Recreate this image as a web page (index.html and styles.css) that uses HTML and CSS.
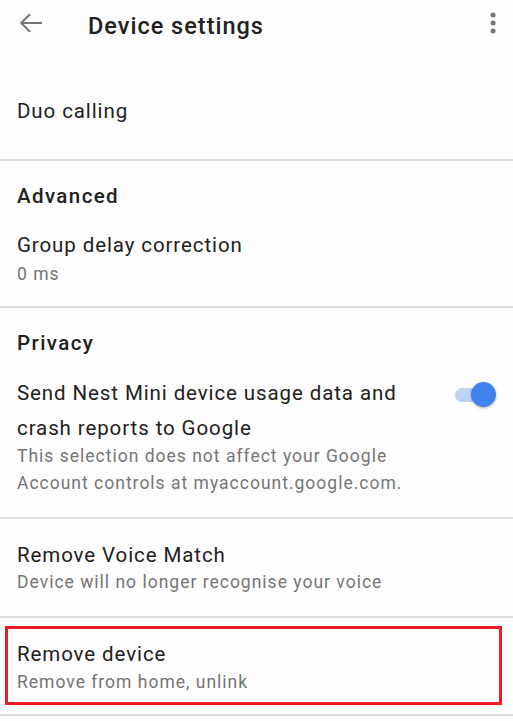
FILE: index.html
```html
<!DOCTYPE html>
<html lang="en">
<head>
  <meta charset="UTF-8">
  <meta name="viewport" content="width=device-width, initial-scale=1.0">
  <title>Device settings</title>
  <link rel="stylesheet" href="styles.css">
</head>
<body>
  <header class="toolbar">
    <button class="icon-btn back" aria-label="Back">
      <svg width="24" height="24" viewBox="0 0 24 24">
        <path d="M23 12H2.5M11 3.2L2.2 12l8.8 8.8" fill="none" stroke="#757575" stroke-width="2"/>
      </svg>
    </button>
    <h1 class="toolbar-title">Device settings</h1>
    <button class="icon-btn more" aria-label="More options">
      <svg width="24" height="24" viewBox="0 0 24 24">
        <circle cx="12" cy="4" r="2.5" fill="#757575"/>
        <circle cx="12" cy="12" r="2.5" fill="#757575"/>
        <circle cx="12" cy="20" r="2.5" fill="#757575"/>
      </svg>
    </button>
  </header>

  <main class="settings">
    <section class="group group-duo">
      <div class="pref-title">Duo calling</div>
    </section>

    <section class="group group-advanced">
      <div class="category">Advanced</div>
      <div class="pref">
        <div class="pref-title">Group delay correction</div>
        <div class="pref-summary">0 ms</div>
      </div>
    </section>

    <section class="group group-privacy">
      <div class="category">Privacy</div>
      <div class="pref pref-row">
        <div class="pref-text">
          <div class="pref-title tall">Send Nest Mini device usage data and<br>crash reports to Google</div>
          <div class="pref-summary">This selection does not affect your Google<br>Account controls at myaccount.google.com.</div>
        </div>
        <div class="switch" role="switch" aria-checked="true">
          <span class="switch-track"></span>
          <span class="switch-thumb"></span>
        </div>
      </div>
    </section>

    <section class="group group-voice">
      <div class="pref-title">Remove Voice Match</div>
      <div class="pref-summary">Device will no longer recognise your voice</div>
    </section>

    <section class="group group-remove">
      <div class="highlight">
        <div class="pref-title">Remove device</div>
        <div class="pref-summary">Remove from home, unlink</div>
      </div>
    </section>
  </main>
</body>
</html>
```

FILE: styles.css
```css
body {
  margin: 0;
  background: #fdfdfd;
  font-family: Roboto, "Liberation Sans", Arial, sans-serif;
  color: #212121;
}

/* Toolbar */
.toolbar {
  display: flex;
  align-items: center;
  height: 46px;
}

.icon-btn {
  display: flex;
  padding: 0;
  border: none;
  background: none;
  cursor: pointer;
}

.back {
  margin-left: 19px;
}

.toolbar-title {
  margin: 5px 0 0 45px;
  font-size: 23.5px;
  font-weight: 500;
  line-height: 28px;
  letter-spacing: 1px;
  color: #212121;
}

.more {
  margin-left: auto;
  margin-right: 8px;
}

/* Groups */
.group {
  padding: 0 17px;
  border-bottom: 2px solid #e0e0e0;
}

.group-duo {
  padding-top: 51px;
  padding-bottom: 34px;
}

.group-advanced {
  padding-top: 21px;
  padding-bottom: 18px;
}

.group-privacy {
  padding-top: 21px;
  padding-bottom: 20px;
}

.group-voice {
  padding-top: 22px;
  padding-bottom: 20px;
}

.group-remove {
  padding: 8px 11px 9px 5px;
}

.category {
  font-size: 20.5px;
  font-weight: 500;
  line-height: 28px;
  letter-spacing: 1.4px;
}

.pref {
  margin-top: 21px;
}

.group-privacy .pref {
  margin-top: 19px;
}

.pref-title {
  font-size: 20.5px;
  line-height: 28px;
  letter-spacing: 0.9px;
}

.pref-title.tall {
  line-height: 35px;
}

.pref-summary {
  margin-top: 1px;
  font-size: 17.5px;
  line-height: 27px;
  letter-spacing: 1px;
  color: #757575;
}

.group-advanced .pref-summary {
  margin-top: 2px;
}

.group-voice .pref-summary {
  margin-top: 0;
}

.pref-title.tall + .pref-summary {
  margin-top: -3px;
}

/* Toggle */
.pref-row {
  display: flex;
  align-items: flex-start;
  justify-content: space-between;
}

.switch {
  position: relative;
  flex: none;
  width: 41px;
  height: 25px;
  margin-top: 6px;
}

.switch-track {
  display: block;
  width: 36px;
  height: 14px;
  margin-top: 5.5px;
  border-radius: 7px;
  background: #bdd4f7;
}

.switch-thumb {
  position: absolute;
  top: 0;
  right: 0;
  width: 25px;
  height: 25px;
  border-radius: 50%;
  background: #4083ee;
  box-shadow: 0 1px 3px rgba(0, 0, 0, 0.3);
}

/* Red annotation box */
.highlight {
  padding: 11px 9px 6px;
  border: 3px solid #ed1c24;
}
```
